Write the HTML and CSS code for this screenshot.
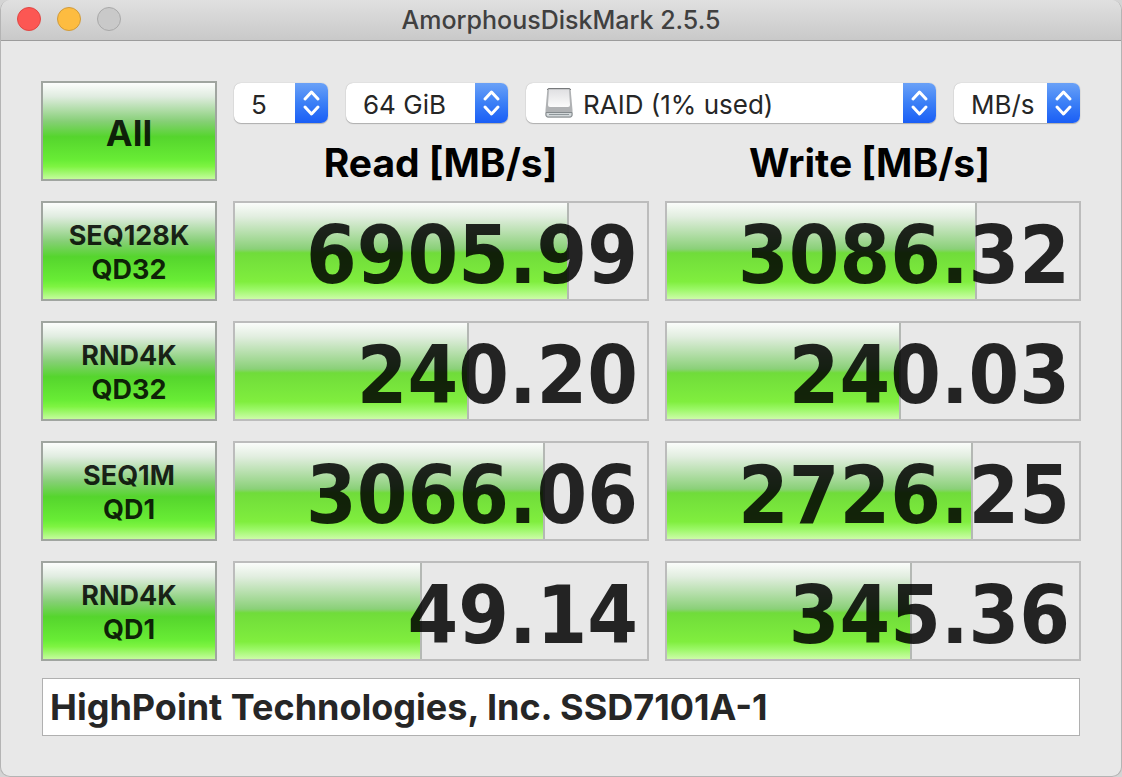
FILE: index.html
```
<!DOCTYPE html>
<html lang="en">
<head>
    <meta charset="UTF-8">
    <meta name="viewport" content="width=device-width, initial-scale=1.0">
    <title>AmorphousDiskMark 2.5.5</title>
    <link rel="stylesheet" href="styles.css">
</head>
<body>

<div class="window">
    <header class="titlebar">
        <div class="lights">
            <button class="light close" aria-label="Close"></button>
            <button class="light minimize" aria-label="Minimize"></button>
            <button class="light zoom" aria-label="Zoom" disabled></button>
        </div>
        <h1>AmorphousDiskMark 2.5.5</h1>
    </header>

    <main>
        <div class="board">
            <button class="test all">All</button>
            <div class="top">
                <div class="options">
                    <div class="select count">
                        <select aria-label="Test count"><option>5</option></select>
                        <span class="arrows"><svg viewBox="0 0 33 40"><path d="M10 16l6.500-7 6.500 7M10 24l6.500 7 6.500-7"/></svg></span>
                    </div>
                    <div class="select size">
                        <select aria-label="Test size"><option>64 GiB</option></select>
                        <span class="arrows"><svg viewBox="0 0 33 40"><path d="M10 16l6.500-7 6.500 7M10 24l6.500 7 6.500-7"/></svg></span>
                    </div>
                    <div class="select volume">
                        <svg class="disk" viewBox="0 0 28 30">
                            <defs>
                                <linearGradient id="lid" x1="0" y1="0" x2="0" y2="1">
                                    <stop offset="0" stop-color="#e0e0e2"/>
                                    <stop offset="1" stop-color="#fbfbfb"/>
                                </linearGradient>
                            </defs>
                            <path d="M4 .5h20q1.500 0 1.700 1.500L27.500 22v5.500q0 2-2 2h-23q-2 0-2-2V22L2.300 2Q2.500.5 4 .5z" fill="#b0b2b4"/>
                            <path d="M2.300 2Q2.500.5 4 .5h20q1.500 0 1.700 1.500" fill="none" stroke="#77797b"/>
                            <path d="M4 1.500h20L25 17q0 2-2 2H5q-2 0-2-2z" fill="url(#lid)"/>
                            <path d="M1 24.500h26v2.500q0 2-2 2H3q-2 0-2-2z" fill="#d3d8da" stroke="#83898c"/>
                            <path d="M4 26.500h20" fill="none" stroke="#8f979a"/>
                        </svg>
                        <select aria-label="Volume"><option>RAID (1% used)</option></select>
                        <span class="arrows"><svg viewBox="0 0 33 40"><path d="M10 16l6.500-7 6.500 7M10 24l6.500 7 6.500-7"/></svg></span>
                    </div>
                    <div class="select unit">
                        <select aria-label="Unit"><option>MB/s</option></select>
                        <span class="arrows"><svg viewBox="0 0 33 40"><path d="M10 16l6.500-7 6.500 7M10 24l6.500 7 6.500-7"/></svg></span>
                    </div>
                </div>
                <div class="headings">
                    <h2>Read [MB/s]</h2>
                    <h2>Write [MB/s]</h2>
                </div>
            </div>

            <button class="test">SEQ128K<br>QD32</button>
            <div class="result"><div class="bar" style="width: 81.1%"></div><span>6905.99</span></div>
            <div class="result"><div class="bar" style="width: 75.3%"></div><span>3086.32</span></div>

            <button class="test">RND4K<br>QD32</button>
            <div class="result"><div class="bar" style="width: 56.8%"></div><span>240.20</span></div>
            <div class="result"><div class="bar" style="width: 56.8%"></div><span>240.03</span></div>

            <button class="test">SEQ1M<br>QD1</button>
            <div class="result"><div class="bar" style="width: 75.3%"></div><span>3066.06</span></div>
            <div class="result"><div class="bar" style="width: 74.3%"></div><span>2726.25</span></div>

            <button class="test">RND4K<br>QD1</button>
            <div class="result"><div class="bar" style="width: 45.4%"></div><span>49.14</span></div>
            <div class="result"><div class="bar" style="width: 59.5%"></div><span>345.36</span></div>
        </div>

        <input class="comment" type="text" aria-label="Comment" value="HighPoint Technologies, Inc. SSD7101A-1">
    </main>
</div>

</body>
</html>
```

FILE: styles.css
```
* {
    box-sizing: border-box;
}

body {
    margin: 0;
    background: #d4d4d4;
    font-family: Inter, "Liberation Sans", sans-serif;
    color: #262626;
}

button, select, input {
    font-family: inherit;
    color: inherit;
}

.window {
    min-height: 100vh;
    background: #e8e8e8;
    border: 1px solid #b4b4b4;
    border-top: none;
    border-radius: 10px;
    overflow: hidden;
}

.titlebar {
    display: grid;
    grid-template-columns: 1fr auto 1fr;
    align-items: center;
    height: 41px;
    padding: 0 16px 2px;
    background: linear-gradient(to bottom, #e0e0e0, #c9c9c9);
    border-bottom: 1px solid #9c9c9c;
}

.titlebar h1 {
    margin: 0;
    padding-top: 2px;
    font-size: 25px;
    font-weight: 500;
    color: #404040;
}

.lights {
    display: flex;
    gap: 16px;
}

.light {
    width: 24px;
    height: 24px;
    padding: 0;
    border: 1px solid #a8a8a8;
    border-radius: 50%;
    background: #c9c9c9;
}

.close {
    background: #fc5753;
    border-color: #df4744;
}

.minimize {
    background: #fdbc40;
    border-color: #cf9a3c;
}

main {
    padding: 40px;
}

.board {
    display: grid;
    grid-template-columns: 176px 1fr 1fr;
    grid-auto-rows: 100px;
    gap: 20px 16px;
}

.test {
    padding: 4px 0 0;
    border: 2px solid #a0a5a0;
    background: linear-gradient(to bottom, #fcfdfc 0%, #e0ece0 14%, #86cf76 40%, #55d52d 56%, #68ec35 80%, #7ef442 87%, #c4fc9c 100%);
    font-size: 27px;
    font-weight: 700;
    line-height: 34px;
    color: rgba(0, 0, 0, 0.85);
}

.test.all {
    font-size: 36px;
}

.top {
    grid-column: span 2;
    padding: 2px 1px 0;
}

.options {
    display: flex;
    gap: 18px;
}

.select {
    position: relative;
    height: 40px;
    background: #fff;
    border-radius: 7px;
    box-shadow: 0 0 1px #a0a0a0, 0 1px 1px #b0b0b0;
    overflow: hidden;
}

.count {
    width: 94px;
}

.size {
    width: 162px;
}

.volume {
    flex: 1;
}

.unit {
    width: 126px;
}

.select select {
    appearance: none;
    width: 100%;
    height: 100%;
    padding: 2px 33px 0 17px;
    border: none;
    background: none;
    font-size: 26px;
}

.volume select {
    padding-left: 57px;
}

.arrows {
    position: absolute;
    top: 0;
    right: 0;
    width: 33px;
    height: 40px;
    background: linear-gradient(to bottom, #6aa1f7, #3b7ff6 50%, #1a5ef6);
    pointer-events: none;
}

.arrows svg {
    display: block;
    fill: none;
    stroke: #fff;
    stroke-width: 3;
    stroke-linecap: round;
    stroke-linejoin: round;
}

.disk {
    position: absolute;
    top: 5px;
    left: 19px;
    width: 28px;
    height: 30px;
    pointer-events: none;
}

.headings {
    display: grid;
    grid-template-columns: 1fr 1fr;
    gap: 16px;
    padding: 16px 4px 0 0;
    text-align: center;
}

.headings h2 {
    margin: 0;
    font-size: 39px;
    line-height: 48px;
    color: #000;
}

.result {
    position: relative;
    display: flex;
    align-items: flex-start;
    justify-content: flex-end;
    padding-right: 9px;
    border: 2px solid #bcbcbc;
}

/* filled part of the result, behind the number */
.bar {
    position: absolute;
    top: 0;
    bottom: 0;
    left: 0;
    border-right: 2px solid #b4b8b4;
    background: linear-gradient(to bottom, #fafcfa 0%, #e2eee0 14%, #8ad078 48%, #70dc3a 52%, #80ee3e 82%, #9cf868 90%, #ccfca8 100%);
}

.result span {
    position: relative;
    font-family: "DejaVu Sans Condensed", "DejaVu Sans", sans-serif;
    font-size: 81px;
    font-weight: 700;
    line-height: 104px;
    color: rgba(0, 0, 0, 0.85);
}

.comment {
    display: block;
    width: calc(100% - 2px);
    height: 58px;
    margin: 17px 1px 0;
    padding: 0 7px;
    border: 1px solid #b0b0b0;
    background: #fff;
    font-size: 36px;
    font-weight: 700;
}
```
